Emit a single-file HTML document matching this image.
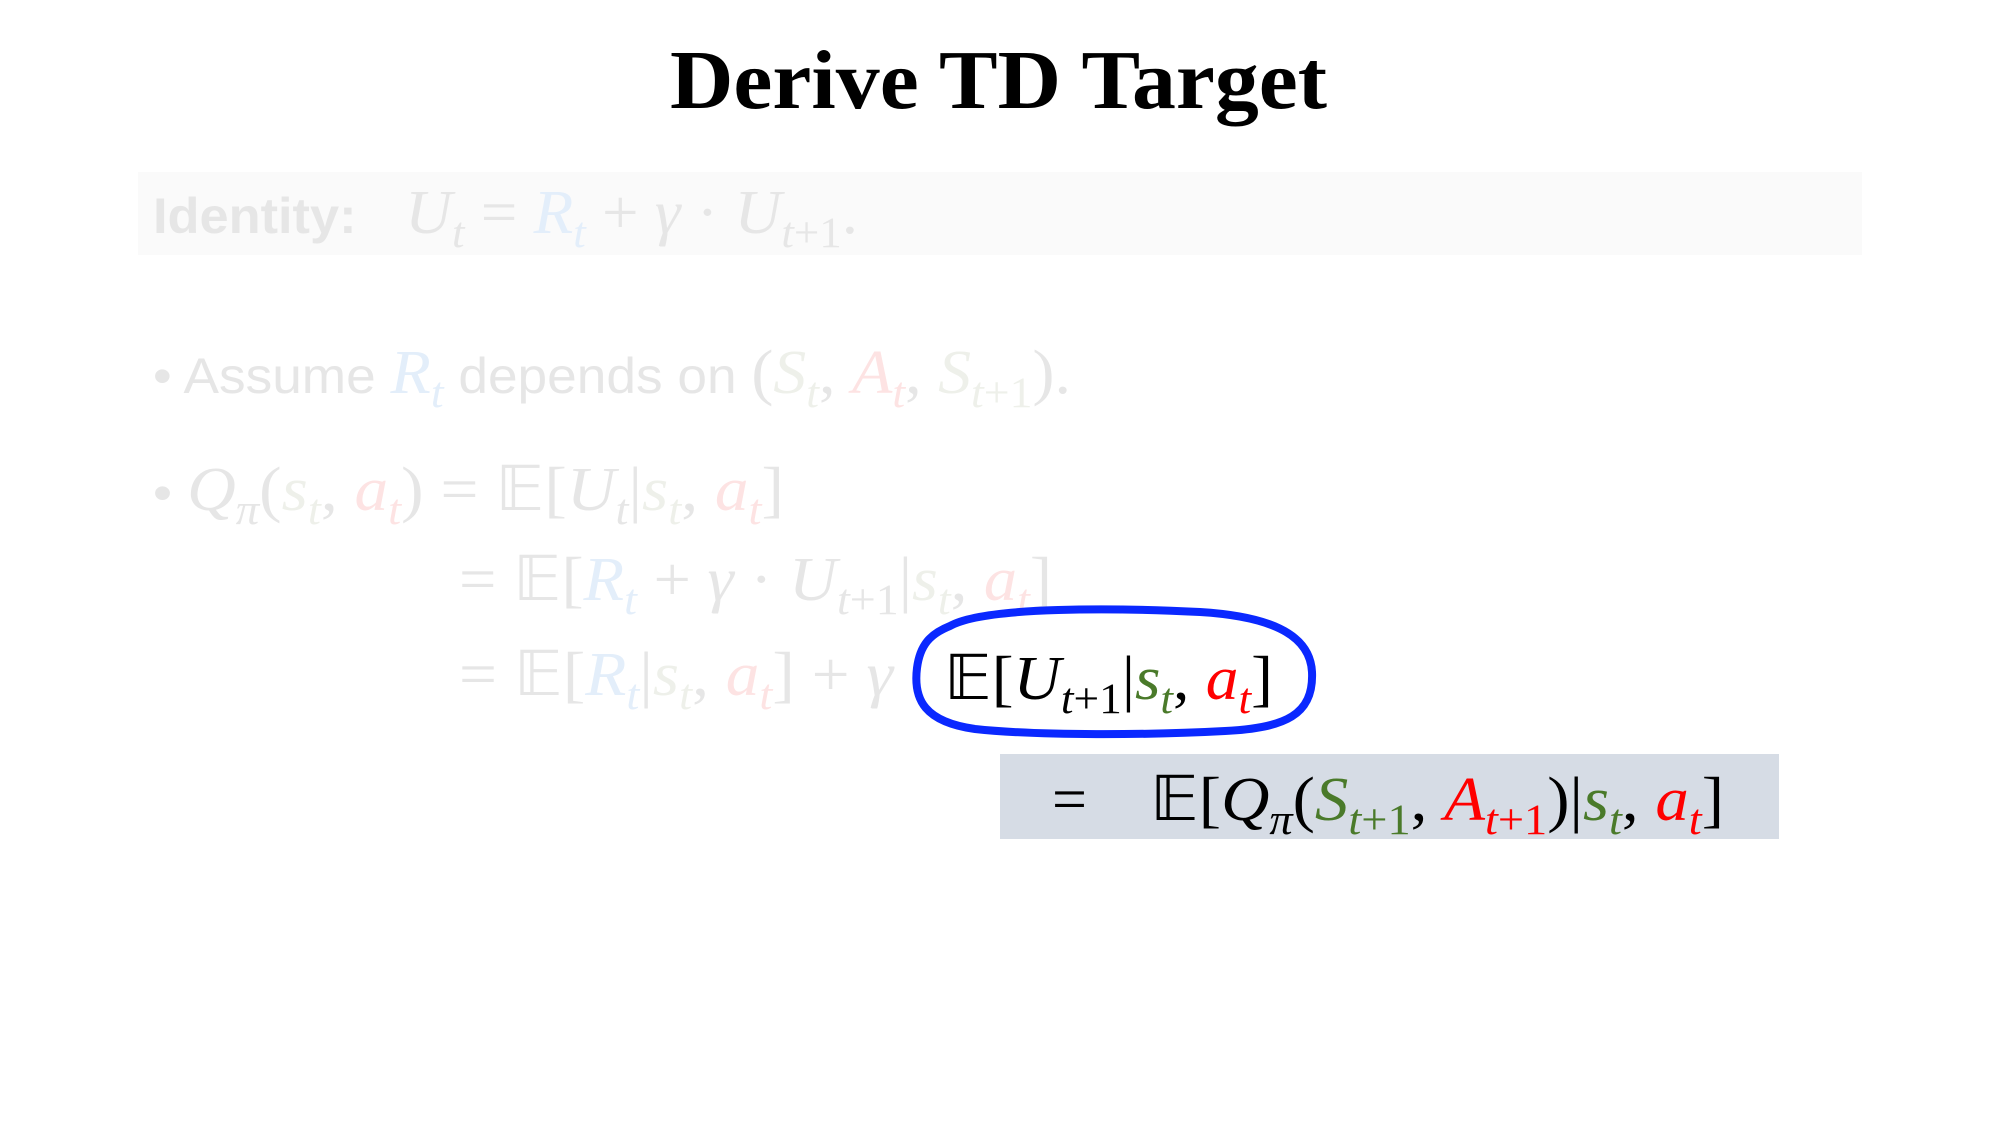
<!DOCTYPE html>
<html><head><meta charset="utf-8"><style>
body{margin:0;width:2000px;height:1125px;background:#fff;overflow:hidden}
svg{position:absolute;left:0;top:0}
text{font-family:"Liberation Serif",serif;font-size:62px;white-space:pre}
.i{font-style:italic}
.s{font-size:43px}
.sans{font-family:"Liberation Sans",sans-serif}
</style></head><body>
<svg width="2000" height="1125">
<text x="670" y="108" textLength="657" lengthAdjust="spacingAndGlyphs" font-weight="bold" style="font-size:84px">Derive TD Target</text>
<rect x="138" y="172" width="1724" height="83" fill="#fafafa"/>

<text x="153" y="233" textLength="705" lengthAdjust="spacingAndGlyphs" fill="#e6e6e6"><tspan class="sans" font-weight="bold" style="font-size:50px">Identity:</tspan><tspan>   </tspan><tspan class="i">U</tspan><tspan class="s i" dy="14">t</tspan><tspan dy="-14"> = </tspan><tspan class="i" fill="#e3eefa">R</tspan><tspan class="s i" dy="14" fill="#e3eefa">t</tspan><tspan dy="-14"> + </tspan><tspan class="i">γ</tspan><tspan> · </tspan><tspan class="i">U</tspan><tspan class="s" dy="14"><tspan class="i">t</tspan>+1</tspan><tspan dy="-14">.</tspan></text>

<text x="153" y="393" textLength="918" lengthAdjust="spacingAndGlyphs" fill="#e6e6e6"><tspan class="sans" style="font-size:50px">• Assume </tspan><tspan class="i" fill="#e3eefa">R</tspan><tspan class="s i" dy="14" fill="#e3eefa">t</tspan><tspan dy="-14" class="sans" style="font-size:50px"> depends on </tspan><tspan>(</tspan><tspan class="i" fill="#eef0ea">S</tspan><tspan class="s i" dy="14" fill="#eef0ea">t</tspan><tspan dy="-14">, </tspan><tspan class="i" fill="#fde3e3">A</tspan><tspan class="s i" dy="14" fill="#fde3e3">t</tspan><tspan dy="-14">, </tspan><tspan class="i" fill="#eef0ea">S</tspan><tspan class="s" dy="14" fill="#eef0ea"><tspan class="i">t</tspan>+1</tspan><tspan dy="-14">).</tspan></text>

<text x="153" y="510" textLength="631" lengthAdjust="spacingAndGlyphs" fill="#e6e6e6"><tspan class="sans" style="font-size:50px">• </tspan><tspan class="i">Q</tspan><tspan class="s i" dy="14">π</tspan><tspan dy="-14">(</tspan><tspan class="i" fill="#eef0ea">s</tspan><tspan class="s i" dy="14" fill="#eef0ea">t</tspan><tspan dy="-14">, </tspan><tspan class="i" fill="#fde3e3">a</tspan><tspan class="s i" dy="14" fill="#fde3e3">t</tspan><tspan dy="-14">) = 𝔼[</tspan><tspan class="i">U</tspan><tspan class="s i" dy="14">t</tspan><tspan dy="-14">|</tspan><tspan class="i" fill="#eef0ea">s</tspan><tspan class="s i" dy="14" fill="#eef0ea">t</tspan><tspan dy="-14">, </tspan><tspan class="i" fill="#fde3e3">a</tspan><tspan class="s i" dy="14" fill="#fde3e3">t</tspan><tspan dy="-14">]</tspan></text>

<text x="459" y="600" textLength="593" lengthAdjust="spacingAndGlyphs" fill="#e6e6e6"><tspan>= 𝔼[</tspan><tspan class="i" fill="#e3eefa">R</tspan><tspan class="s i" dy="14" fill="#e3eefa">t</tspan><tspan dy="-14"> + </tspan><tspan class="i">γ</tspan><tspan> · </tspan><tspan class="i">U</tspan><tspan class="s" dy="14"><tspan class="i">t</tspan>+1</tspan><tspan dy="-14">|</tspan><tspan class="i" fill="#eef0ea">s</tspan><tspan class="s i" dy="14" fill="#eef0ea">t</tspan><tspan dy="-14">, </tspan><tspan class="i" fill="#fde3e3">a</tspan><tspan class="s i" dy="14" fill="#fde3e3">t</tspan><tspan dy="-14">]</tspan></text>

<text x="459" y="695" textLength="434" lengthAdjust="spacingAndGlyphs" fill="#e6e6e6"><tspan>= 𝔼[</tspan><tspan class="i" fill="#e3eefa">R</tspan><tspan class="s i" dy="14" fill="#e3eefa">t</tspan><tspan dy="-14">|</tspan><tspan class="i" fill="#eef0ea">s</tspan><tspan class="s i" dy="14" fill="#eef0ea">t</tspan><tspan dy="-14">, </tspan><tspan class="i" fill="#fde3e3">a</tspan><tspan class="s i" dy="14" fill="#fde3e3">t</tspan><tspan dy="-14">] + </tspan><tspan class="i">γ</tspan></text>

<path d="M950 626 C985 606,1120 608,1200 612 C1265 616,1310 632,1312 672 C1314 715,1285 728,1225 731 C1150 735,1040 736,975 729 C925 722,913 700,917 668 C920 645,930 634,950 626 Z" fill="none" stroke="#0a28ff" stroke-width="8"/>

<text x="944" y="699" textLength="329" lengthAdjust="spacingAndGlyphs"><tspan>𝔼[</tspan><tspan class="i">U</tspan><tspan class="s" dy="14"><tspan class="i">t</tspan>+1</tspan><tspan dy="-14">|</tspan><tspan class="i" fill="#4a7a2a">s</tspan><tspan class="s i" dy="14" fill="#4a7a2a">t</tspan><tspan dy="-14">, </tspan><tspan class="i" fill="#f00">a</tspan><tspan class="s i" dy="14" fill="#f00">t</tspan><tspan dy="-14">]</tspan></text>

<rect x="1000" y="754" width="779" height="85" fill="#d6dce5"/>
<text x="1052" y="820" style="font-size:62px">=</text>
<text x="1150" y="820" textLength="574" lengthAdjust="spacingAndGlyphs"><tspan>𝔼[</tspan><tspan class="i">Q</tspan><tspan class="s i" dy="14">π</tspan><tspan dy="-14">(</tspan><tspan class="i" fill="#4a7a2a">S</tspan><tspan class="s" dy="14" fill="#4a7a2a"><tspan class="i">t</tspan>+1</tspan><tspan dy="-14">, </tspan><tspan class="i" fill="#f00">A</tspan><tspan class="s" dy="14" fill="#f00"><tspan class="i">t</tspan>+1</tspan><tspan dy="-14">)|</tspan><tspan class="i" fill="#4a7a2a">s</tspan><tspan class="s i" dy="14" fill="#4a7a2a">t</tspan><tspan dy="-14">, </tspan><tspan class="i" fill="#f00">a</tspan><tspan class="s i" dy="14" fill="#f00">t</tspan><tspan dy="-14">]</tspan></text>
</svg>
</body></html>
